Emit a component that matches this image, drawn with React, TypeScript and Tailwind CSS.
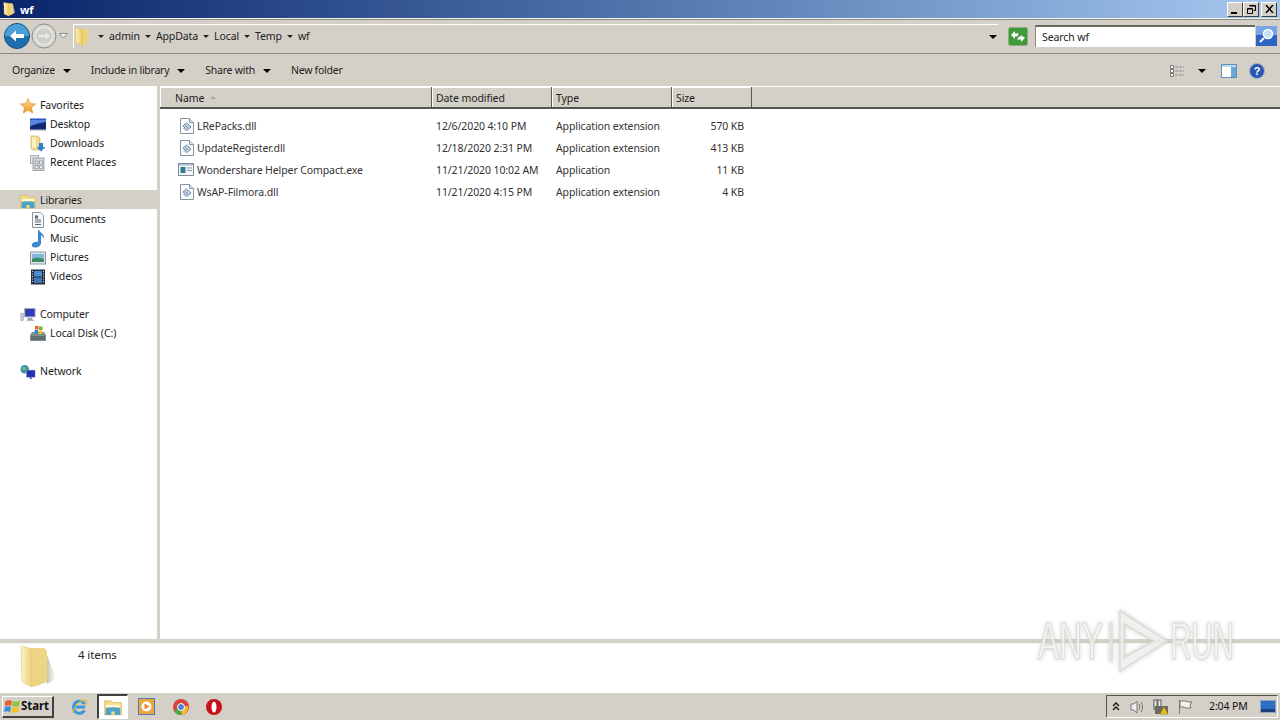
import React from "react";

const Caret = () => (
  <span className="inline-block w-0 h-0 border-l-[4px] border-r-[4px] border-t-[4px] border-l-transparent border-r-transparent border-t-black" />
);
const Small = () => <span className="inline-block w-0 h-0 border-l-[3px] border-r-[3px] border-t-[3px] border-l-transparent border-r-transparent border-t-[#222]" />;

const Folder = ({ w = 16, h = 16, id }: { w?: number; h?: number; id: string }) => (
  <svg width={w} height={h} viewBox="0 0 16 18" className="shrink-0">
    <defs>
      <linearGradient id={id} x1="0" y1="0" x2="1" y2="0">
        <stop offset="0" stopColor="#fff3c0" />
        <stop offset="1" stopColor="#e9c85e" />
      </linearGradient>
    </defs>
    <path d="M1 1l7 1h3l1.500 1.500V15l-6 2.500L1.500 15z" fill="#efd27a" />
    <path d="M1 1l6.500 2v14.500L1.500 15z" fill={`url(#${id})`} stroke="#d9b95a" strokeWidth=".4" />
    <path d="M12.500 4l2 9-2 2z" fill="#d8d4c0" />
  </svg>
);

const Star = () => (
  <svg width="16" height="16" viewBox="0 0 16 16"><defs><linearGradient id="st" x1="0" y1="0" x2="0" y2="1"><stop offset="0" stopColor="#ffe08a" /><stop offset="1" stopColor="#ee9428" /></linearGradient></defs><path d="M8 .5l2.200 5 5.300.5-4 3.500 1.200 5.500L8 12.200 3.300 15l1.200-5.500-4-3.500 5.300-.5z" fill="url(#st)" stroke="#dc8a22" strokeWidth=".6" /></svg>
);
const Desktop = () => (
  <svg width="16" height="16" viewBox="0 0 16 16"><rect x="0" y="1.500" width="16" height="12" fill="#2c56c8" /><path d="M0 10c4-3 10-3 16-5v8.500H0z" fill="#13276f" /><path d="M0 3h16v2C10 5 5 7 0 9z" fill="#5e86e0" /><rect x="0" y="12.500" width="16" height="1.500" fill="#c9d2dc" /></svg>
);
const Downloads = () => (
  <svg width="16" height="17" viewBox="0 0 16 17"><path d="M1 1h7l2 2v12H3l-2-1z" fill="#efd98c" stroke="#b9a25a" strokeWidth=".5" /><path d="M2 2h4v11H2z" fill="#fbf0c0" /><path d="M9 8h4v4h2.500L11 16.500 6.500 12H9z" fill="#2f7fd0" /></svg>
);
const Recent = () => (
  <svg width="16" height="16" viewBox="0 0 16 16"><rect x="0.500" y="0.500" width="8" height="8" fill="#dfe3e6" stroke="#8f989e" strokeWidth=".7" /><rect x="3" y="3" width="11" height="12.500" fill="#d2d8dc" stroke="#7f8a90" strokeWidth=".7" /><path d="M5 6h3v3H5zM9.500 6h3v3h-3zM5 10.500h3v3H5zM9.500 10.500h3v3h-3z" fill="#eef1f3" stroke="#77828a" strokeWidth=".6" /></svg>
);
const Lib = ({ s = 16 }: { s?: number }) => (
  <svg width={s} height={s} viewBox="0 0 16 16"><path d="M.5 2.500h6l1 1.500h8v11H.5z" fill="#f5dc84" stroke="#cfae55" strokeWidth=".5" /><path d="M2 6h12v2H2z" fill="#fff8d8" /><path d="M1.500 9c4-1 9-1 13 0v6H9.500v-3h-3v3h-5z" fill="#4ea2c9" /></svg>
);
const Doc = () => (
  <svg width="16" height="16" viewBox="0 0 16 16"><path d="M2.500.5h8l3 3v12h-11z" fill="#f4f6f8" stroke="#8a96a2" /><path d="M5 3.500h3v3H5z" fill="#59656f" /><path d="M5 8h6M5 10h6M5 12.500h6" stroke="#5d6d7d" /></svg>
);
const Music = () => (
  <svg width="16" height="18" viewBox="0 0 16 18"><path d="M9 0c1 3 6 4 5 9-1-3-2-3-3-3.500V13c0 2.500-2.500 4.500-6 4.500-4 0-4-3.500-1.500-5 2-1 3.500-1 4.500-.4V0z" fill="#3a87cf" /></svg>
);
const Pictures = () => (
  <svg width="16" height="16" viewBox="0 0 16 16"><rect x=".5" y="2" width="15" height="12" fill="#e0e6ea" stroke="#8a98a4" /><rect x="2" y="4" width="12" height="8" fill="#7fb8d8" /><path d="M2 9c4-2 8-1 12 0v3H2z" fill="#3f8a6a" /></svg>
);
const Videos = () => (
  <svg width="16" height="16" viewBox="0 0 16 16"><rect x="1" y="0.500" width="14" height="15" fill="#26303a" /><rect x="4" y="2" width="8" height="5.500" fill="#4b8bd2" /><rect x="4" y="8.500" width="8" height="5.500" fill="#3f76b8" /><path d="M2 2.500h1M2 5h1M2 7.500h1M2 10h1M2 12.500h1M13 2.500h1M13 5h1M13 7.500h1M13 10h1M13 12.500h1" stroke="#d8dde2" /></svg>
);
const Computer = () => (
  <svg width="17" height="16" viewBox="0 0 17 16"><rect x="5" y="1" width="11" height="9" fill="#2f3bb5" stroke="#a8b2bc" /><rect x="1" y="6" width="2.500" height="8" fill="#c9d0d6" stroke="#7c868e" strokeWidth=".5" /><path d="M8 11h5v2h2v1H7v-1h1z" fill="#9aa4ac" /></svg>
);
const Disk = () => (
  <svg width="16" height="16" viewBox="0 0 16 16"><path d="M0 9l2-3h12l2 3v6H0z" fill="#7f8f8e" /><rect x="1" y="10" width="14" height="4" fill="#5f6f70" /><rect x="5" y="0" width="3.500" height="3.500" fill="#e8672c" /><rect x="9" y="0.500" width="3.500" height="3.500" fill="#7ab52d" /><rect x="4.500" y="4" width="3.500" height="3.500" fill="#2e84d8" /><rect x="8.500" y="4.500" width="3.500" height="3.500" fill="#f1bd1e" /></svg>
);
const Net = () => (
  <svg width="17" height="16" viewBox="0 0 17 16"><circle cx="5" cy="5" r="4.500" fill="#3e93a5" /><path d="M2 3h4v3H3zM6 7h2v2H6z" fill="#7cb98c" /><rect x="7" y="6" width="9" height="7.500" fill="#2330b0" stroke="#8892c8" strokeWidth=".5" /><path d="M10.500 13.500h2v2h-2z" fill="#56647c" /></svg>
);
const Dll = () => (
  <svg width="14" height="16" viewBox="0 0 14 16"><path d="M.5.500h9l4 4v11H.5z" fill="#fbfcfd" stroke="#8593a2" /><path d="M9.500.5v4h4" fill="#dfe5ea" stroke="#8593a2" /><path d="M3 8l3.500-3L11 9l-3.500 3z" fill="#c7d3e2" stroke="#5b7ca6" strokeWidth=".9" /><path d="M3.500 10l3 3M5.500 7.500l2.500 2.500" stroke="#5b7ca6" strokeWidth=".8" /></svg>
);
const Exe = () => (
  <svg width="16" height="14" viewBox="0 0 16 14"><rect x=".5" y=".5" width="15" height="12" fill="#f3f6f8" stroke="#7f8b96" /><rect x="1" y="1" width="14" height="1.500" fill="#a8c0d4" /><rect x="2.500" y="4" width="5" height="6" fill="#2f7e8f" /><path d="M9 5h5M9 7.500h5" stroke="#8a98a4" /></svg>
);

const NavRow = ({ icon, label, indent = false, selected = false }: { icon: React.ReactNode; label: string; indent?: boolean; selected?: boolean }) => (
  <div className={`h-[19px] pt-[2px] flex items-center ${selected ? "bg-[#d4d0c8]" : ""} ${indent ? "pl-[30px]" : "pl-[20px]"}`}>
    <span className="w-[16px] h-[16px] flex items-center justify-center shrink-0">{icon}</span>
    <span className="ml-[4px] text-[#1c1c1c]">{label}</span>
  </div>
);

const files = [
  { n: "LRePacks.dll", d: "12/6/2020 4:10 PM", t: "Application extension", s: "570 KB", exe: false },
  { n: "UpdateRegister.dll", d: "12/18/2020 2:31 PM", t: "Application extension", s: "413 KB", exe: false },
  { n: "Wondershare Helper Compact.exe", d: "11/21/2020 10:02 AM", t: "Application", s: "11 KB", exe: true },
  { n: "WsAP-Filmora.dll", d: "11/21/2020 4:15 PM", t: "Application extension", s: "4 KB", exe: false },
];

const Crumb = ({ t }: { t: string }) => (
  <span className="flex items-center"><Small /><span className="ml-[5px] mr-[5px]">{t}</span></span>
);

const WinBtn = ({ children }: { children: React.ReactNode }) => (
  <div className="w-[16px] h-[15px] bg-[#d4d0c8] border-t border-l border-white border-r border-b border-r-[#404040] border-b-[#404040] flex items-center justify-center">{children}</div>
);

const HeadCell = ({ w, label, sort = false }: { w: string; label: string; sort?: boolean }) => (
  <div className={`${w} h-full pt-[2px] flex items-center border-r border-r-[#5a5a52] shrink-0 shadow-[inset_1px_1px_0_#fff]`}>
    {label === "Name" ? <span className="ml-[15px]">{label}</span> : <span className="ml-[4px]">{label}</span>}
    {sort && <span className="ml-[6px] mb-[2px] w-0 h-0 border-l-[3px] border-r-[3px] border-b-[3px] border-l-transparent border-r-transparent border-b-[#aaa]" />}
  </div>
);

const Mark = ({ t, cls }: { t: string; cls: string }) => (
  <span className={`block w-[65px] text-[51px] leading-none font-['Liberation_Sans',sans-serif] text-white/60 [-webkit-text-stroke:1px_#d8d8d4] origin-left whitespace-nowrap ${cls}`}>{t}</span>
);

export default function App() {
  return (
    <div className="relative w-[1280px] h-[720px] overflow-hidden flex flex-col bg-[#d4d0c8] text-[10.5px] tracking-[-0.1px] leading-none text-[#1c1c1c] font-['Noto_Sans','Open_Sans',sans-serif]">
      {/* title */}
      <div className="h-[18px] shrink-0 flex items-center justify-between bg-gradient-to-r from-[#0a246a] to-[#a6caf0]">
        <div className="flex items-center pl-[3px]">
          <Folder w={13} h={16} id="f1" />
          <span className="ml-[4px] text-[11px] text-white font-bold">wf</span>
        </div>
        <div className="flex items-center pr-[3px]">
          <WinBtn><span className="mt-[7px] mr-[2px] w-[6px] h-[2px] bg-black" /></WinBtn>
          <WinBtn><svg width="9" height="9" viewBox="0 0 9 9"><path d="M2.500.5h6v5h-2M.5 3.500h5v5h-5zM.5 4h5M2.500 1h6" fill="none" stroke="#000" /></svg></WinBtn>
          <div className="ml-[2px]"><WinBtn><svg width="9" height="8" viewBox="0 0 9 8"><path d="M1 0l7 8M8 0L1 8" stroke="#000" strokeWidth="1.500" /></svg></WinBtn></div>
        </div>
      </div>
      {/* address */}
      <div className="h-[36px] shrink-0 flex items-center border-t border-t-[#f4f4f0] border-b border-b-[#8c8c84] pl-[4px] pr-[3px] shadow-[inset_0_1px_0_#8c8c84]">
        <svg width="26" height="26" viewBox="0 0 26 26" className="shrink-0"><circle cx="13" cy="13" r="12.500" fill="#1f6fb0" stroke="#0f4a78" /><path d="M1 13a12 12 0 0 1 24 0z" fill="#4a9fd8" /><path d="M6 13l6-5.500V11h8v4h-8v3.500z" fill="#fff" /></svg>
        <svg width="26" height="26" viewBox="0 0 26 26" className="shrink-0 ml-[1px]"><circle cx="13" cy="13" r="12" fill="#d8d8d4" stroke="#8c8c88" /><circle cx="13" cy="13" r="8.500" fill="#cfcfca" stroke="#ececea" /><path d="M20 13l-6-5v3H7v4h7v3z" fill="#e4e4e0" stroke="#b0b0ac" strokeWidth=".5" /></svg>
        <svg width="9" height="6" viewBox="0 0 9 6" className="ml-[2px] shrink-0"><path d="M.5.500h8L4.500 5z" fill="#f4f4f0" stroke="#8c8c88" /></svg>
        <div className="ml-[5px] w-[925px] h-[24px] flex items-center border-t border-t-white border-l border-l-white">
          <Folder w={18} h={19} id="f2" />
          <div className="ml-[6px] flex items-center text-[#222]">
            <Crumb t="admin" /><Crumb t="AppData" /><Crumb t="Local" /><Crumb t="Temp" /><Crumb t="wf" />
          </div>
          <div className="ml-auto mr-[1px] flex"><Caret /></div>
        </div>
        <svg width="20" height="19" viewBox="0 0 20 19" className="ml-[10px] shrink-0"><rect x=".5" y=".5" width="19" height="18" rx="2" fill="#3f9a3a" stroke="#8fa888" /><path d="M3 8l4-4v2.500h4L9 9.500H7V12zM17 11l-4 4v-2.500H9l2-3h2V8z" fill="#fff" /></svg>
        <div className="ml-[7px] w-[220px] h-[22px] bg-white flex items-center pl-[6px] border-t-2 border-t-[#6a6a62] border-l border-l-[#8c8c84] text-[#222]">Search wf</div>
        <svg width="21" height="20" viewBox="0 0 21 20" className="shrink-0 ml-[1px]"><rect width="21" height="20" fill="#2f64c4" /><rect width="21" height="9" fill="#7ba4e8" /><circle cx="12" cy="8" r="4.500" fill="#bfe0fa" stroke="#fff" strokeWidth="1.500" /><path d="M8 12l-4 4" stroke="#fff" strokeWidth="2" /></svg>
      </div>
      {/* toolbar */}
      <div className="h-[31px] pt-[2px] shrink-0 flex items-center pl-[12px] pr-[15px] text-[#222] tracking-[-0.25px]">
        <span>Organize</span><span className="ml-[8px] flex"><Caret /></span>
        <span className="ml-[20px]">Include in library</span><span className="ml-[8px] flex"><Caret /></span>
        <span className="ml-[20px]">Share with</span><span className="ml-[8px] flex"><Caret /></span>
        <span className="ml-[20px]">New folder</span>
        <div className="ml-auto flex items-center">
          <svg width="16" height="14" viewBox="0 0 16 14"><path d="M1.500 1.500h3v3h-3zM1.500 5.500h3v3h-3zM1.500 9.500h3v3h-3z" fill="#fff" stroke="#777" /><path d="M6 3h9M6 7h9M6 11h9" stroke="#8a8a88" strokeDasharray="3 1" /></svg>
          <span className="ml-[13px] flex"><Caret /></span>
          <svg width="16" height="14" viewBox="0 0 16 14" className="ml-[15px]"><rect x=".5" y=".5" width="15" height="13" fill="#fff" stroke="#5f8fb8" /><rect x="10" y="1" width="5" height="12" fill="#6ba8d6" /><rect x="1" y="1" width="14" height="2" fill="#bcd8ec" /></svg>
          <svg width="16" height="16" viewBox="0 0 16 16" className="ml-[12px]"><circle cx="8" cy="8" r="7.500" fill="#2a58b0" stroke="#9fb0cc" /><text x="8" y="12" textAnchor="middle" fontSize="11" fontWeight="700" fill="#fff" fontFamily="Liberation Sans">?</text></svg>
        </div>
      </div>
      {/* body */}
      <div className="flex-1 flex min-h-0 pt-[1px]">
        <div className="w-[157px] shrink-0 bg-white pt-[9px]">
          <NavRow icon={<Star />} label="Favorites" />
          <NavRow icon={<Desktop />} label="Desktop" indent />
          <NavRow icon={<Downloads />} label="Downloads" indent />
          <NavRow icon={<Recent />} label="Recent Places" indent />
          <div className="h-[19px]" />
          <NavRow icon={<Lib />} label="Libraries" selected />
          <NavRow icon={<Doc />} label="Documents" indent />
          <NavRow icon={<Music />} label="Music" indent />
          <NavRow icon={<Pictures />} label="Pictures" indent />
          <NavRow icon={<Videos />} label="Videos" indent />
          <div className="h-[19px]" />
          <NavRow icon={<Computer />} label="Computer" />
          <NavRow icon={<Disk />} label="Local Disk (C:)" indent />
          <div className="h-[19px]" />
          <NavRow icon={<Net />} label="Network" />
        </div>
        <div className="w-[3px] shrink-0" />
        <div className="flex-1 flex flex-col bg-white">
          <div className="h-[23px] shrink-0 flex bg-[#d4d0c8] border-b-2 border-b-[#55554f] border-t border-t-white">
            <HeadCell w="w-[272px]" label="Name" sort />
            <HeadCell w="w-[120px]" label="Date modified" />
            <HeadCell w="w-[120px]" label="Type" />
            <HeadCell w="w-[80px]" label="Size" />
          </div>
          <div className="pt-[6px]">
            {files.map((f) => (
              <div key={f.n} className="h-[22px] flex items-center">
                <div className={`w-[272px] shrink-0 flex items-center ${f.exe ? "pl-[18px]" : "pl-[20px]"}`}>
                  <span className="flex">{f.exe ? <Exe /> : <Dll />}</span>
                  <span className="ml-[3px] text-[#333]">{f.n}</span>
                </div>
                <div className="w-[120px] shrink-0 pl-[4px] text-[#333]">{f.d}</div>
                <div className="w-[120px] shrink-0 pl-[4px] text-[#333]">{f.t}</div>
                <div className="w-[72px] shrink-0 text-right text-[#333]">{f.s}</div>
              </div>
            ))}
          </div>
        </div>
      </div>
      {/* status */}
      <div className="h-[49px] shrink-0 mt-[4px] bg-white flex border-t border-t-[#f4f4f0]">
        <svg width="38" height="44" viewBox="0 0 38 44" className="ml-[19px] mt-[1px] shrink-0">
          <defs>
            <linearGradient id="sf" x1="0" y1="0" x2="1" y2="0"><stop offset="0" stopColor="#fdf3c8" /><stop offset="1" stopColor="#ecd07a" /></linearGradient>
            <linearGradient id="ss" x1="0" y1="0" x2="1" y2="0"><stop offset="0" stopColor="#c8c4b4" /><stop offset="1" stopColor="#ffffff" /></linearGradient>
          </defs>
          <path d="M28 10l9 24-9 5z" fill="url(#ss)" />
          <path d="M2 1l9 2h14l3 3v31l-13 5-12-5z" fill="#eed586" />
          <path d="M2 1l11 3v38l-10-5z" fill="url(#sf)" stroke="#e0c46c" strokeWidth=".5" />
        </svg>
        <span className="ml-[21px] mt-[5px] text-[11.500px] text-[#222]">4 items</span>
      </div>
      {/* taskbar */}
      <div className="h-[28px] shrink-0 flex items-center border-t border-t-white pl-[2px] pr-[2px]">
        <div className="w-[52px] h-[22px] border-t border-l border-white border-r-2 border-b-2 border-r-[#404040] border-b-[#404040] flex items-center pl-[1px]">
          <svg width="17" height="17" viewBox="0 0 17 17" className="shrink-0"><path d="M1 4c2-2 4-2 7-1l-1 5c-2-1-4-1-6 0z" fill="#e8602c" /><path d="M9 3c3 1 4 1 7-1l-1 6c-2 1-4 1-7 0z" fill="#8cc63f" /><path d="M1 9c2-1 4-1 6 0l-1 5c-2-1-4-1-6 0z" fill="#2e8ee0" /><path d="M8 9c2 1 4 1 7 0l-1 5c-3 1-5 1-7 0z" fill="#f7c321" /></svg>
          <span className="text-[11.500px] font-bold text-[#111]">Start</span>
        </div>
        <svg width="18" height="18" viewBox="0 0 18 18" className="ml-[16px]"><path d="M15 9H4M14.500 12.500A6 6 0 1 1 14.500 6" fill="none" stroke="#3a9ad9" strokeWidth="3" /><path d="M2 15C5 7 12 1 16 2c2 1 0 5-1 6" fill="none" stroke="#e8b93c" strokeWidth="1.200" /></svg>
        <div className="ml-[9px] w-[31px] h-[25px] bg-white border-t-2 border-l-2 border-t-[#404040] border-l-[#404040] border-r border-b border-r-white border-b-white flex items-center justify-center">
          <Lib s={18} />
        </div>
        <svg width="18" height="18" viewBox="0 0 18 18" className="ml-[10px]"><rect x=".5" y=".5" width="16" height="16" fill="#f0a53a" stroke="#4a7cb8" /><circle cx="8.500" cy="8.500" r="5" fill="#fff" /><path d="M6.500 5.500l5 3-5 3z" fill="#e8862a" /></svg>
        <svg width="18" height="18" viewBox="0 0 18 18" className="ml-[16px]"><circle cx="9" cy="9" r="8" fill="#d9443a" /><path d="M9 9L2 13a8 8 0 0 0 8 4z" fill="#4aa84a" /><path d="M9 9l7-1a8 8 0 0 1-6 9z" fill="#f2c42c" /><circle cx="9" cy="9" r="3.500" fill="#4a82d8" stroke="#fff" /></svg>
        <svg width="18" height="18" viewBox="0 0 18 18" className="ml-[15px]"><circle cx="9" cy="9" r="8" fill="#c8101c" /><ellipse cx="9" cy="9" rx="2.500" ry="5.500" fill="#fff" /></svg>
        <div className="ml-auto w-[172px] h-[23px] flex items-center border-t border-l border-t-[#55554f] border-l-[#55554f] border-r border-b border-r-white border-b-white pl-[5px]">
          <svg width="8" height="9" viewBox="0 0 8 9"><path d="M1 4l3-3 3 3M1 8l3-3 3 3" fill="none" stroke="#111" strokeWidth="1.300" /></svg>
          <svg width="16" height="16" viewBox="0 0 16 16" className="ml-[9px]"><path d="M2 5h3l3-3v12l-3-3H2z" fill="#eee" stroke="#777" /><path d="M10 5c1 2 1 4 0 6M12 3c2 3 2 7 0 10" fill="none" stroke="#777" /></svg>
          <svg width="16" height="16" viewBox="0 0 16 16" className="ml-[8px]"><rect x="1" y="1" width="3" height="9" fill="#eee" stroke="#555" /><rect x="5" y="1" width="3" height="7" fill="#eee" stroke="#555" /><rect x="2" y="7" width="13" height="8" fill="#6c6c5c" /><path d="M11 8l4 7H7z" fill="#f2c41c" stroke="#8a6c10" strokeWidth=".5" /></svg>
          <svg width="16" height="16" viewBox="0 0 16 16" className="ml-[8px]"><path d="M2.500 1v14" stroke="#777" /><path d="M3 2h6l2 1h4l-2 3 1 3h-5l-2-1H3z" fill="#f4f4f0" stroke="#777" /></svg>
          <span className="ml-[16px] w-[40px] text-[#111] whitespace-nowrap">2:04 PM</span>
          <svg width="16" height="13" viewBox="0 0 16 13" className="ml-[11px]"><rect x=".5" y=".5" width="15" height="12" fill="#2d6fc2" stroke="#8aa6c6" /><rect x="1" y="9" width="14" height="3" fill="#1f3f78" /></svg>
        </div>
      </div>
      {/* watermark */}
      <div className="absolute left-[1038px] top-[610px] h-[62px] flex items-center pointer-events-none drop-shadow-[0_0_2px_#c4c4c0]">
        <Mark t="ANY" cls="scale-x-[0.62]" />
        <svg width="62" height="62" viewBox="0 0 62 62" className="ml-[5px]">
          <path d="M3 12v40" fill="none" stroke="#e2e2de" strokeWidth="3" />
          <path d="M12 1l47 30-47 30zM16 14l30 17-30 17z" fill="#ffffff" fillOpacity=".6" fillRule="evenodd" stroke="#dcdcd8" strokeWidth="1.500" />
        </svg>
        <Mark t="RUN" cls="scale-x-[0.58]" />
      </div>
    </div>
  );
}
